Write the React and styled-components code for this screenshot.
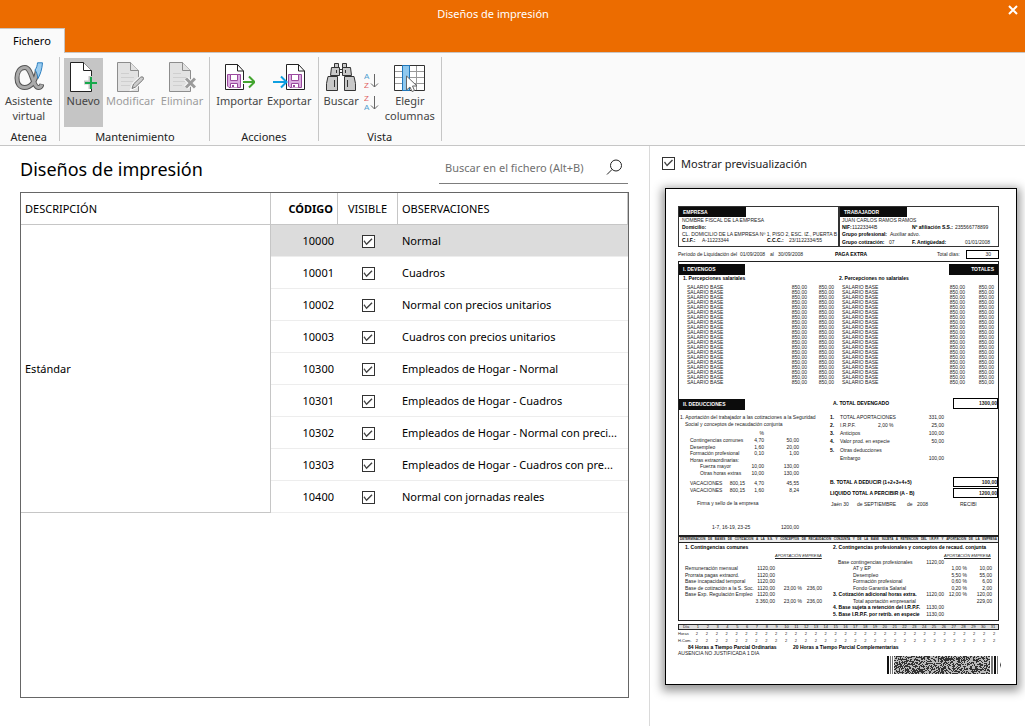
import React, { useState } from 'react';
import styled, { createGlobalStyle } from 'styled-components';

const GlobalStyle = createGlobalStyle`
    * { box-sizing: border-box; }
    body {
        margin: 0;
        background: #fff;
        color: #000;
        font-family: "Noto Sans", "Open Sans", sans-serif;
        font-size: 11px;
    }
    button, input {
        font: inherit;
        color: inherit;
    }
`;

const Page = styled.div`
    display: flex;
    flex-direction: column;
    min-height: 100vh;
`;

/* title bar and ribbon */

const TitleBar = styled.header`
    display: flex;
    align-items: flex-start;
    height: 28px;
    background: #ec6c00;
    color: #fff;
    h1 {
        flex: 1;
        margin: 0;
        text-align: center;
        font-size: 11px;
        font-weight: 400;
        line-height: 28px;
    }
`;

const CloseButton = styled.button`
    width: 39px;
    height: 20px;
    padding: 0 0 0 22px;
    border: 0;
    background: none;
    cursor: pointer;
    svg { display: block; }
`;

const TabBar = styled.nav`
    display: flex;
    height: 25px;
    background: #ec6c00;
    box-shadow: inset 0 -1px #c9c5c2;
`;

const Tab = styled.button`
    padding: 0 13px;
    border: 1px solid #c9c5c2;
    border-width: 1px 1px 0 0;
    background: #fafafa;
    line-height: 24px;
`;

const Ribbon = styled.div`
    display: flex;
    padding: 4px 0;
    border-bottom: 1px solid #c6c6c6;
    background: #fafafa;
`;

const Group = styled.section`
    display: flex;
    flex-direction: column;
    height: 84px;
    padding: ${p => p.$pad || '1px 4px 0'};
    border-right: 1px solid #c6c6c6;
    h2 {
        margin: 4px 0 0;
        text-align: center;
        font-size: 11px;
        font-weight: 400;
        line-height: 12px;
        color: #222;
    }
`;

const Tools = styled.div`
    flex: none;
    display: flex;
    height: 69px;
`;

const ToolButton = styled.button`
    display: flex;
    flex-direction: column;
    align-items: center;
    padding: 4px ${p => (p.$side === undefined ? 3 : p.$side)}px 0;
    border: 0;
    background: ${p => (p.$active ? '#c5c5c5' : 'none')};
    color: #444;
    line-height: 15px;
    text-align: center;
    &:disabled { color: #9d9d9d; }
    svg {
        flex: none;
        display: block;
        margin-bottom: 1px;
    }
`;

const SortTools = styled.div`
    display: flex;
    flex-direction: column;
    gap: 4px;
    padding: 14px 3px 0 4px;
`;

const SortButton = styled.button`
    padding: 0;
    border: 0;
    background: none;
    svg {
        display: block;
        font-family: "Liberation Sans", Arial, sans-serif;
        font-size: 8px;
    }
`;

/* list side */

const Main = styled.main`
    flex: 1;
    display: grid;
    grid-template-columns: minmax(0, 1fr) 376px;
`;

const ListPane = styled.section`
    display: flex;
    flex-direction: column;
    padding: 3px 20px 28px;
`;

const ListHeader = styled.div`
    display: flex;
    justify-content: space-between;
    align-items: flex-start;
    height: 43px;
    padding: 5px 1px 0 0;
    h2 {
        margin: 0;
        font-size: 18px;
        font-weight: 400;
        line-height: 30px;
    }
`;

const Search = styled.label`
    display: flex;
    align-items: center;
    width: 189px;
    height: 30px;
    padding: 0 5px 2px 6px;
    border-bottom: 1px solid #7d7d7d;
    input {
        flex: 1;
        min-width: 0;
        padding: 0;
        border: 0;
        outline: 0;
        background: none;
    }
    input::placeholder {
        color: #707070;
        opacity: 1;
    }
`;

const TableFrame = styled.div`
    flex: 1;
    border: 1px solid #666;
`;

const Table = styled.table`
    width: 100%;
    table-layout: fixed;
    border-collapse: separate;
    border-spacing: 0;
    th, td {
        height: 32px;
        padding: 0 4px;
        text-align: left;
        font-weight: 400;
        white-space: nowrap;
        overflow: hidden;
    }
    thead th {
        border-right: 1px solid #c6c6c6;
        border-bottom: 1px solid #c6c6c6;
    }
    tbody td { border-bottom: 1px solid #ededed; }
    tbody th {
        border-right: 1px solid #c6c6c6;
        border-bottom: 1px solid #c6c6c6;
    }
    .code { text-align: right; }
    thead .code { font-weight: 700; }
    .visible { text-align: center; }
    .visible input { vertical-align: middle; }
`;

const CodeCol = styled.col`width: 67px;`;
const VisibleCol = styled.col`width: 60px;`;
const DescriptionCol = styled.col`width: 250px;`;

const Row = styled.tr`
    td { background: ${p => (p.$selected ? '#dcdcdc' : '#fff')}; }
`;

const Check = styled.input.attrs({ type: 'checkbox' })`
    appearance: none;
    display: inline-grid;
    width: 13px;
    height: 13px;
    margin: 0;
    border: 1px solid #333;
    background: #fff;
    &:checked::before {
        content: "";
        width: 11px;
        height: 11px;
        background: #444;
        clip-path: polygon(1px 5px, 2px 4px, 4px 7px, 9px 2px, 10px 3px, 4px 9px);
    }
`;

/* preview side */

const PreviewPane = styled.aside`
    padding: 9px 8px 20px 12px;
    border-left: 1px solid #dadada;
`;

const PreviewToggle = styled.label`
    display: flex;
    align-items: center;
    gap: 6px;
    height: 16px;
    color: #222;
`;

const Paper = styled.article`
    margin: 17px 0 0 3px;
    padding: 17px 17px 0 12px;
    aspect-ratio: 352 / 497;
    border: 1px solid #000;
    background: #fff;
    box-shadow: 0 3px 9px 3px #999;
    font-family: "Liberation Sans", Arial, sans-serif;
    font-size: 5px;
    line-height: 7px;
    color: #222;
    white-space: nowrap;
`;

const Line = styled.div`
    display: grid;
    grid-template-columns: ${p => p.$cols};
    height: ${p => p.$h}px;
    line-height: ${p => p.$h}px;
`;

const Cell = styled.span`
    min-width: 0;
    padding-left: ${p => p.$indent || 0}px;
    display: flex;
    justify-content: ${p => (p.$right ? 'flex-end' : 'flex-start')};
    font-weight: ${p => (p.$bold ? 700 : 400)};
    color: ${p => (p.$bold ? '#000' : 'inherit')};
`;

const Halves = styled.div`
    display: grid;
    grid-template-columns: ${p => p.$split} minmax(0, 1fr);
`;

const Party = styled.div`
    height: 41px;
    border: 1px solid #333;
`;

const Tag = styled.div`
    width: ${p => p.$w}px;
    height: ${p => p.$h || 11}px;
    padding: 0 4px;
    background: #0c0c0c;
    color: #fff;
    font-weight: 700;
    line-height: ${p => p.$h || 11}px;
    text-align: ${p => (p.$right ? 'right' : 'left')};
`;

const Box = styled.div`
    border: 1px solid #222;
    border-top-width: ${p => (p.$open ? 0 : 1)}px;
`;

const Amount = styled.span`
    border: 1px solid #000;
    padding-right: ${p => p.$pad || 0}px;
    line-height: ${p => (p.$h || 11) - 2}px;
    text-align: right;
    font-weight: ${p => (p.$light ? 400 : 700)};
`;

const TagRow = styled.div`
    display: flex;
    justify-content: space-between;
    padding-top: 2px;
    height: 13px;
`;

const Caption = styled.div`
    height: 7px;
    padding: 0 1px;
    overflow: hidden;
    border: 1px solid #222;
    background: #eee;
    font-size: 3px;
    font-weight: 700;
    line-height: 5px;
    text-align-last: justify;
`;

const Underlined = styled.span`
    font-size: 4px;
    font-style: italic;
    text-decoration: underline;
`;

const Calendar = styled.div`
    display: grid;
    grid-template-columns: 14px repeat(31, minmax(0, 1fr));
    height: ${p => (p.$head ? 6 : 7)}px;
    margin-top: ${p => (p.$head ? 3 : 0)}px;
    border: ${p => (p.$head ? '1px solid #222' : '0')};
    background: ${p => (p.$head ? '#ddd' : 'none')};
    font-size: 4px;
    line-height: ${p => (p.$head ? 4 : 7)}px;
    text-align: center;
    span:first-child { text-align: ${p => (p.$head ? 'center' : 'left')}; }
`;

const Barcode = styled.div`
    display: flex;
    justify-content: flex-end;
    margin-right: -3px;
    svg { display: block; }
`;

/* icons */

const CloseIcon = () => (
    <svg width="10" height="20" viewBox="0 0 10 20" fill="none" stroke="#fff" strokeWidth="2">
        <path d="M1 6l8 8M9 6l-8 8" />
    </svg>
);

const AlphaIcon = () => (
    <svg width="30" height="30" viewBox="0 0 30 30" fill="none">
        <path d="M23.500 8C22 17 18 25.500 10.500 25.500C5.500 25.500 3 21.500 3 16C3 10 6 5.500 11 5.500C18 5.500 18.500 25.500 24.500 25.500C26.500 25.500 27.500 24 28 22" stroke="#555" strokeWidth="5" />
        <path d="M23.500 8C22 17 18 25.500 10.500 25.500C5.500 25.500 3 21.500 3 16C3 10 6 5.500 11 5.500C18 5.500 18.500 25.500 24.500 25.500C26.500 25.500 27.500 24 27.800 22.500" stroke="#aaa" strokeWidth="3" />
        <path d="M23.500 .8H28.500C28 7 26.500 12 24 16.500C23.500 13 22.500 10 21 8C22.500 6 23.300 3.500 23.500 .8z" fill="#9ccdf0" stroke="#2c7fc0" />
    </svg>
);

const Sheet = ({ stroke, fill }) => (
    <g fill={fill} stroke={stroke}>
        <path d="M1.500 .5H14.500L22.500 8.500V29.500H1.500z" />
        <path d="M14.500 .5V8.500H22.500" />
    </g>
);

const NewIcon = () => (
    <svg width="28" height="30" viewBox="0 0 28 30">
        <Sheet stroke="#222" fill="#fff" />
        <path d="M15 20.500H28M21.500 14V27" stroke="#c5c5c5" strokeWidth="4" />
        <path d="M16 21H28M22 15V27" stroke="#17a84b" strokeWidth="2" />
    </svg>
);

const TextLines = () => <path d="M5 11.500H13M5 15.500H18M5 19.500H17M5 23.500H14" stroke="#cfcfcf" />;

const EditIcon = () => (
    <svg width="28" height="30" viewBox="0 0 28 30">
        <Sheet stroke="#8d8d8d" fill="#e2e2e2" />
        <TextLines />
        <path d="M16 26.500L17.500 22L25 14.800Q27 14 27.800 15.500Q28 17 27 18L19.500 25z" fill="#ddd" stroke="#fafafa" strokeWidth="3" />
        <path d="M16 26.500L17.500 22L24.500 15.300Q26 14.300 27.200 15.300Q28 16.800 26.800 18L19.500 25z" fill="#ccc" stroke="#777" />
    </svg>
);

const DeleteIcon = () => (
    <svg width="28" height="30" viewBox="0 0 28 30">
        <Sheet stroke="#8d8d8d" fill="#e2e2e2" />
        <TextLines />
        <path d="M18 16.500l9 9M27 16.500l-9 9" stroke="#fafafa" strokeWidth="5" />
        <path d="M18 16.500l9 9M27 16.500l-9 9" stroke="#9b9b9b" strokeWidth="3" />
    </svg>
);

const DiskSheet = () => (
    <g>
        <path d="M.5 2.500H12.500L18.500 9V27.500H.5z" fill="#fff" stroke="#222" />
        <path d="M12.500 2.500V9H18.500" fill="none" stroke="#222" />
        <path d="M2.500 12.500H15.500V25.500H4L2.500 24z" fill="#dcaee0" stroke="#9a4a9e" />
        <path d="M5.500 12.500H12.500V18.500H5.500z" fill="#fff" stroke="#9a4a9e" />
        <path d="M5.500 25.500V21.500H12.500V25.500" fill="#fff" stroke="#9a4a9e" />
        <path d="M7 23h2v2h-2z" fill="#9a4a9e" />
    </g>
);

const ImportIcon = () => (
    <svg width="30" height="30" viewBox="0 0 30 30" fill="none">
        <DiskSheet />
        <path d="M17 20H30" stroke="#fafafa" strokeWidth="4" />
        <path d="M18 20H29M24 14.500l5.500 5.500L24 25.500" stroke="#43a52f" strokeWidth="2" />
    </svg>
);

const ExportIcon = () => (
    <svg width="32" height="30" viewBox="0 0 32 30" fill="none">
        <g transform="translate(13 0)"><DiskSheet /></g>
        <path d="M0 20H13M8 14.500l5.500 5.500L8 25.500" stroke="#0f9fe0" strokeWidth="2" />
    </svg>
);

const BinocularsIcon = () => (
    <svg width="30" height="30" viewBox="0 0 30 30" fill="#c8c8c8" stroke="#333">
        <path d="M12.500 7.500h5M12.500 10.500h5" fill="none" />
        <path d="M8.500 1.500h4v4h-4zM16.500 1.500h4v4h-4z" />
        <path d="M5.500 5.500h8v8h-9zM16.500 5.500h8l1 8h-9z" />
        <path d="M2 14.500h9.500v14H.5v-7zM18.500 14.500H28l1.500 7v7h-11z" />
        <path d="M8.500 18v7M21.500 18v7M10.500 8v3M19.500 8v3" />
    </svg>
);

const SortIcon = ({ first, second }) => (
    <svg width="16" height="18" viewBox="0 0 16 18">
        <text x="0" y="7" fill={first === 'A' ? '#4f9fd0' : '#e06060'}>{first}</text>
        <text x="0" y="16" fill={second === 'A' ? '#4f9fd0' : '#e06060'}>{second}</text>
        <path d="M10.500 2V15M7 11.500l3.500 3.500L14 11.500" fill="none" stroke="#666" />
    </svg>
);

const ColumnsIcon = () => (
    <svg width="32" height="30" viewBox="0 0 32 30" fill="none">
        <path d="M1 3.500H30V28H1z" fill="#fff" />
        <path d="M1 9.500H30M1 15.500H30M1 21.500H30M22.500 4V28" stroke="#999" />
        <path d="M.5 3.500H30.500V28.500H.5z" stroke="#333" />
        <path d="M8.500 3.500H15.500V28.500H8.500z" fill="#8fc8ee" stroke="#1f78bd" />
        <path d="M12.500 14V28L16 25L18 29.500L20.500 28.500L18.500 24H23z" fill="#fff" stroke="#666" />
    </svg>
);

const SearchIcon = () => (
    <svg width="17" height="17" viewBox="0 0 17 17" fill="none" stroke="#222">
        <circle cx="10" cy="6.500" r="5.500" />
        <path d="M6 10.500L1 15.500" />
    </svg>
);

// stacked code pattern: dense cells between two sets of guard bars
const BarcodeIcon = () => {
    const cells = [];
    let seed = 7;
    for (let y = 0; y < 18; y += 1) {
        for (let x = 8; x < 104; x += 1) {
            seed = (seed * 1103515245 + 12345) % 2147483648;
            if (seed / 2147483648 > 0.5) cells.push(`M${x} ${y}h1v1h-1z`);
        }
    }
    return (
        <svg width="116" height="18" viewBox="0 0 116 18">
            <path d="M8 0H104V18H8z" fill="#bbb" />
            <path d={cells.join('')} fill="#333" />
            <path d="M1 0h2v18H1zM108 0h2v18h-2z" fill="#111" />
            <path d="M4 0h1v18H4zM6 0h1v18H6zM105 0h2v18h-2zM111 0h1v18h-1z" fill="#777" />
            <path d="M114 6l1 3l-1 3z" fill="#333" />
        </svg>
    );
};

/* payslip */

const b = (text, indent) => ({ text, indent, bold: true });
const i = (text, indent) => ({ text, indent });

// every row is [height, ...cells]; align has one letter for each column
function Lines({ cols, align, rows }) {
    return rows.map(([height, ...cells], n) => (
        <Line key={n} $cols={cols} $h={height}>
            {cells.map((cell, c) => {
                if (React.isValidElement(cell)) return React.cloneElement(cell, { key: c });
                const part = typeof cell === 'string' ? { text: cell } : cell;
                return (
                    <Cell key={c} $right={align[c] === 'r'} $bold={part.bold} $indent={part.indent}>
                        {part.text}
                    </Cell>
                );
            })}
        </Line>
    ));
}

const salaryRow = [5, i('SALARIO BASE', 8), '850,00', '850,00', i('SALARIO BASE', 8), '850,00', '850,00'];

const workerDeductions = [
    [4],
    [7, i('1. Aportación del trabajador a las cotizaciones a la Seguridad', 1)],
    [6, i('Social y conceptos de recaudación conjunta', 6)],
    [3],
    [7, '', '', '%'],
    [7, i('Contingencias comunes', 11), '', '4,70', '50,00'],
    [6, i('Desempleo', 11), '', '1,60', '20,00'],
    [7, i('Formación profesional', 11), '', '0,10', '1,00'],
    [6, i('Horas extraordinarias:', 11)],
    [7, i('Fuerza mayor', 21), '', '10,00', '130,00'],
    [6, i('Otras horas extras', 21), '', '10,00', '130,00'],
    [4],
    [7, i('VACACIONES', 11), '800,15', '4,70', '45,55'],
    [6, i('VACACIONES', 11), '800,15', '1,60', '8,24'],
    [7],
    [7, i('Firma y sello de la empresa', 18)],
    [17],
    [7, i('1-7, 16-19, 23-25', 33), '', '', i('1200,00', 18)],
    [4],
];

const totals = [
    [11, b('A. TOTAL DEVENGADO', 3), '', '', '', '', <Amount>1300,00</Amount>],
    [4],
    [8, b('1.'), 'TOTAL APORTACIONES', '', '331,00'],
    [8, b('2.'), 'I.R.P.F.', '2,00   %', '25,00'],
    [8, b('3.'), 'Anticipos', '', '100,00'],
    [9, b('4.'), 'Valor prod. en especie', '', '50,00'],
    [8, b('5.'), 'Otras deducciones', '', ''],
    [8, '', 'Embargo', '', '100,00'],
    [15],
    [10, b('B. TOTAL A DEDUCIR (1+2+3+4+5)'), '', '', '', '', <Amount $h={10}>100,00</Amount>],
    [1],
    [10, b('LIQUIDO TOTAL A PERCIBIR (A - B)'), '', '', '', '', <Amount $h={10}>1200,00</Amount>],
    [3],
];

const commonBases = [
    [1],
    [7, b('1. Contingencias comunes', 6)],
    [2],
    [6, '', '', <Underlined>APORTACIÓN EMPRESA</Underlined>],
    [6],
    [7, i('Remuneración mensual', 6), '1120,00'],
    [6, i('Prorrata pagas extraord.', 6), '1120,00'],
    [7, i('Base incapacidad temporal', 6), '1120,00'],
    [6, i('Base de cotización a la S. Soc.', 6), '1120,00', '23,00 %', '236,00'],
    [7, i('Base Exp. Regulación Empleo', 6), '1120,00'],
    [6, '', '3.360,00', '23,00 %', '236,00'],
];

const professionalBases = [
    [1],
    [7, b('2. Contingencias profesionales y conceptos de recaud. conjunta')],
    [2],
    [6, '', '', <Underlined>APORTACIÓN EMPRESA</Underlined>],
    [6, i('Base contingencias profesionales', 5), '1120,00'],
    [7, i('AT y EP', 20), '', '1,00 %', '10,00'],
    [6, i('Desempleo', 20), '', '5,50 %', '55,00'],
    [7, i('Formación profesional', 20), '', '0,60 %', '6,00'],
    [6, i('Fondo Garantía Salarial', 20), '', '0,20 %', '2,00'],
    [7, b('3. Cotización adicional horas extra.'), '1120,00', '12,00 %', '120,00'],
    [6, i('Total aportación empresarial', 20), '', '', '229,00'],
    [7, b('4. Base sujeta a retención del I.R.P.F.'), '1130,00'],
    [7, b('5. Base I.R.P.F. por retrib. en especie'), '1130,00'],
    [2],
];

const days = Array.from({ length: 31 }, (_, n) => n + 1);

function Payslip() {
    return (
        <Paper>
            <Halves $split="161px">
                <Party>
                    <Tag $w={67} $h={10}>EMPRESA</Tag>
                    <Lines
                        cols="20px 65px 22px 1fr"
                        align="llll"
                        rows={[
                            [7, i('NOMBRE FISCAL DE LA EMPRESA', 3)],
                            [7, b('Domicilio:', 3)],
                            [6, i('CL. DOMICILIO DE LA EMPRESA Nº 1, PISO 2, ESC. IZ., PUERTA B', 3)],
                            [7, b('C.I.F.:', 3), i('A-11223344', 3), b('C.C.C.:', 3), i('23/1122334/55', 3)],
                        ]}
                    />
                </Party>
                <Party>
                    <Tag $w={67} $h={10}>TRABAJADOR</Tag>
                    <Lines
                        cols="12px 37px 20px 32px 1fr"
                        align="lllll"
                        rows={[
                            [7, i('JUAN CARLOS RAMOS RAMOS', 2)],
                            [7, b('NIF:', 2), '11223344B', '', b('Nº afiliación S.S.:', 3), i('235566778899', 14)],
                            [6, b('Grupo profesional:', 2), '', i('Auxiliar advo.', 1)],
                            [2],
                            [7, b('Grupo cotización:', 2), '', '07', b('F. Antigüedad:', 3), i('01/01/2008', 24)],
                        ]}
                    />
                </Party>
            </Halves>
            <Line $cols="1fr" $h={3} />
            <Lines
                cols="62px 30px 8px 57px 102px 29px minmax(0, 1fr)"
                align="lllllll"
                rows={[[9, 'Período de Liquidación del', '01/09/2008', 'al', '30/09/2008', b('PAGA EXTRA'), 'Total días:',
                    <Amount $h={9} $light $pad={7}>30</Amount>]]}
            />
            <Line $cols="1fr" $h={2} />
            <Box>
                <TagRow>
                    <Tag $w={66}>I. DEVENGOS</Tag>
                    <Tag $w={49} $right>TOTALES</Tag>
                </TagRow>
                <Lines
                    cols="113px 15px 27px 101px 30px 29px"
                    align="lrrlrr"
                    rows={[
                        [7, b('1. Percepciones salariales', 4), '', '', b('2. Percepciones no salariales', 5)],
                        [3],
                        ...Array(20).fill(salaryRow),
                        [13],
                    ]}
                />
                <Halves $split="151px">
                    <div>
                        <Line $cols="1fr" $h={1} />
                        <Tag $w={66}>II. DEDUCCIONES</Tag>
                        <Lines cols="51px 15px 19px 35px" align="lrrr" rows={workerDeductions} />
                    </div>
                    <div>
                        <Lines cols="10px 38px 19px 47px 9px minmax(0, 1fr)" align="lllrll" rows={totals} />
                        <Lines
                            cols="27px 50px 10px 43px 1fr"
                            align="lllll"
                            rows={[[7, i('Jaén 30', 1), 'de  SEPTIEMBRE', 'de', '2008', 'RECIBI']]}
                        />
                    </div>
                </Halves>
            </Box>
            <Caption>
                DETERMINACIÓN DE BASES DE COTIZACIÓN A LA S.S. Y CONCEPTOS DE RECAUDACIÓN CONJUNTA Y DE LA BASE SUJETA A RETENCIÓN DEL I.R.P.F. Y APORTACIÓN DE LA EMPRESA
            </Caption>
            <Box $open>
                <Halves $split="154px">
                    <div><Lines cols="79px 17px 27px 20px" align="lrrr" rows={commonBases} /></div>
                    <div><Lines cols="91px 20px 23px 25px" align="lrrr" rows={professionalBases} /></div>
                </Halves>
            </Box>
            <Calendar $head>
                <span>Día</span>
                {days.map(day => <span key={day}>{day}</span>)}
            </Calendar>
            <Calendar>
                <span>Horas</span>
                {days.map(day => <span key={day}>2</span>)}
            </Calendar>
            <Calendar>
                <span>H.Com.</span>
                {days.map(day => <span key={day}>2</span>)}
            </Calendar>
            <Lines
                cols="115px 1fr"
                align="ll"
                rows={[
                    [6, b('84 Horas a Tiempo Parcial Ordinarias', 10), b('20 Horas a Tiempo Parcial Complementarias')],
                    [6, 'AUSENCIA NO JUSTIFICADA 1 DIA'],
                ]}
            />
            <Barcode><BarcodeIcon /></Barcode>
        </Paper>
    );
}

const designs = [
    ['10000', 'Normal'],
    ['10001', 'Cuadros'],
    ['10002', 'Normal con precios unitarios'],
    ['10003', 'Cuadros con precios unitarios'],
    ['10300', 'Empleados de Hogar - Normal'],
    ['10301', 'Empleados de Hogar - Cuadros'],
    ['10302', 'Empleados de Hogar - Normal con preci...'],
    ['10303', 'Empleados de Hogar - Cuadros con pre...'],
    ['10400', 'Normal con jornadas reales'],
];

function RibbonBar() {
    return (
        <Ribbon>
            <Group $pad="1px 3px 0 2px">
                <Tools>
                    <ToolButton><AlphaIcon />Asistente<br />virtual</ToolButton>
                </Tools>
                <h2>Atenea</h2>
            </Group>
            <Group $pad="1px 3px 0 4px">
                <Tools>
                    <ToolButton $active><NewIcon />Nuevo</ToolButton>
                    <ToolButton disabled><EditIcon />Modificar</ToolButton>
                    <ToolButton disabled><DeleteIcon />Eliminar</ToolButton>
                </Tools>
                <h2>Mantenimiento</h2>
            </Group>
            <Group>
                <Tools>
                    <ToolButton $side={2}><ImportIcon />Importar</ToolButton>
                    <ToolButton $side={2}><ExportIcon />Exportar</ToolButton>
                </Tools>
                <h2>Acciones</h2>
            </Group>
            <Group>
                <Tools>
                    <ToolButton $side={1}><BinocularsIcon />Buscar</ToolButton>
                    <SortTools>
                        <SortButton aria-label="Orden ascendente"><SortIcon first="A" second="Z" /></SortButton>
                        <SortButton aria-label="Orden descendente"><SortIcon first="Z" second="A" /></SortButton>
                    </SortTools>
                    <ToolButton $side={2}><ColumnsIcon />Elegir<br />columnas</ToolButton>
                </Tools>
                <h2>Vista</h2>
            </Group>
        </Ribbon>
    );
}

function App() {
    const [selected, setSelected] = useState('10000');
    const [preview, setPreview] = useState(true);

    return (
        <Page>
            <GlobalStyle />
            <TitleBar>
                <h1>Diseños de impresión</h1>
                <CloseButton aria-label="Cerrar"><CloseIcon /></CloseButton>
            </TitleBar>
            <TabBar><Tab>Fichero</Tab></TabBar>
            <RibbonBar />
            <Main>
                <ListPane>
                    <ListHeader>
                        <h2>Diseños de impresión</h2>
                        <Search>
                            <input type="text" aria-label="Buscar en el fichero" placeholder="Buscar en el fichero (Alt+B)" />
                            <SearchIcon />
                        </Search>
                    </ListHeader>
                    <TableFrame>
                        <Table>
                            <colgroup>
                                <DescriptionCol />
                                <CodeCol />
                                <VisibleCol />
                                <col />
                            </colgroup>
                            <thead>
                                <tr>
                                    <th>DESCRIPCIÓN</th>
                                    <th className="code">CÓDIGO</th>
                                    <th className="visible">VISIBLE</th>
                                    <th>OBSERVACIONES</th>
                                </tr>
                            </thead>
                            <tbody>
                                {designs.map(([code, notes], n) => (
                                    <Row key={code} $selected={code === selected} onClick={() => setSelected(code)}>
                                        {n === 0 && <th rowSpan={designs.length} scope="rowgroup">Estándar</th>}
                                        <td className="code">{code}</td>
                                        <td className="visible"><Check defaultChecked aria-label={`Visible ${code}`} /></td>
                                        <td>{notes}</td>
                                    </Row>
                                ))}
                            </tbody>
                        </Table>
                    </TableFrame>
                </ListPane>
                <PreviewPane>
                    <PreviewToggle>
                        <Check checked={preview} onChange={e => setPreview(e.target.checked)} />
                        Mostrar previsualización
                    </PreviewToggle>
                    {preview && <Payslip />}
                </PreviewPane>
            </Main>
        </Page>
    );
}

export default App;
